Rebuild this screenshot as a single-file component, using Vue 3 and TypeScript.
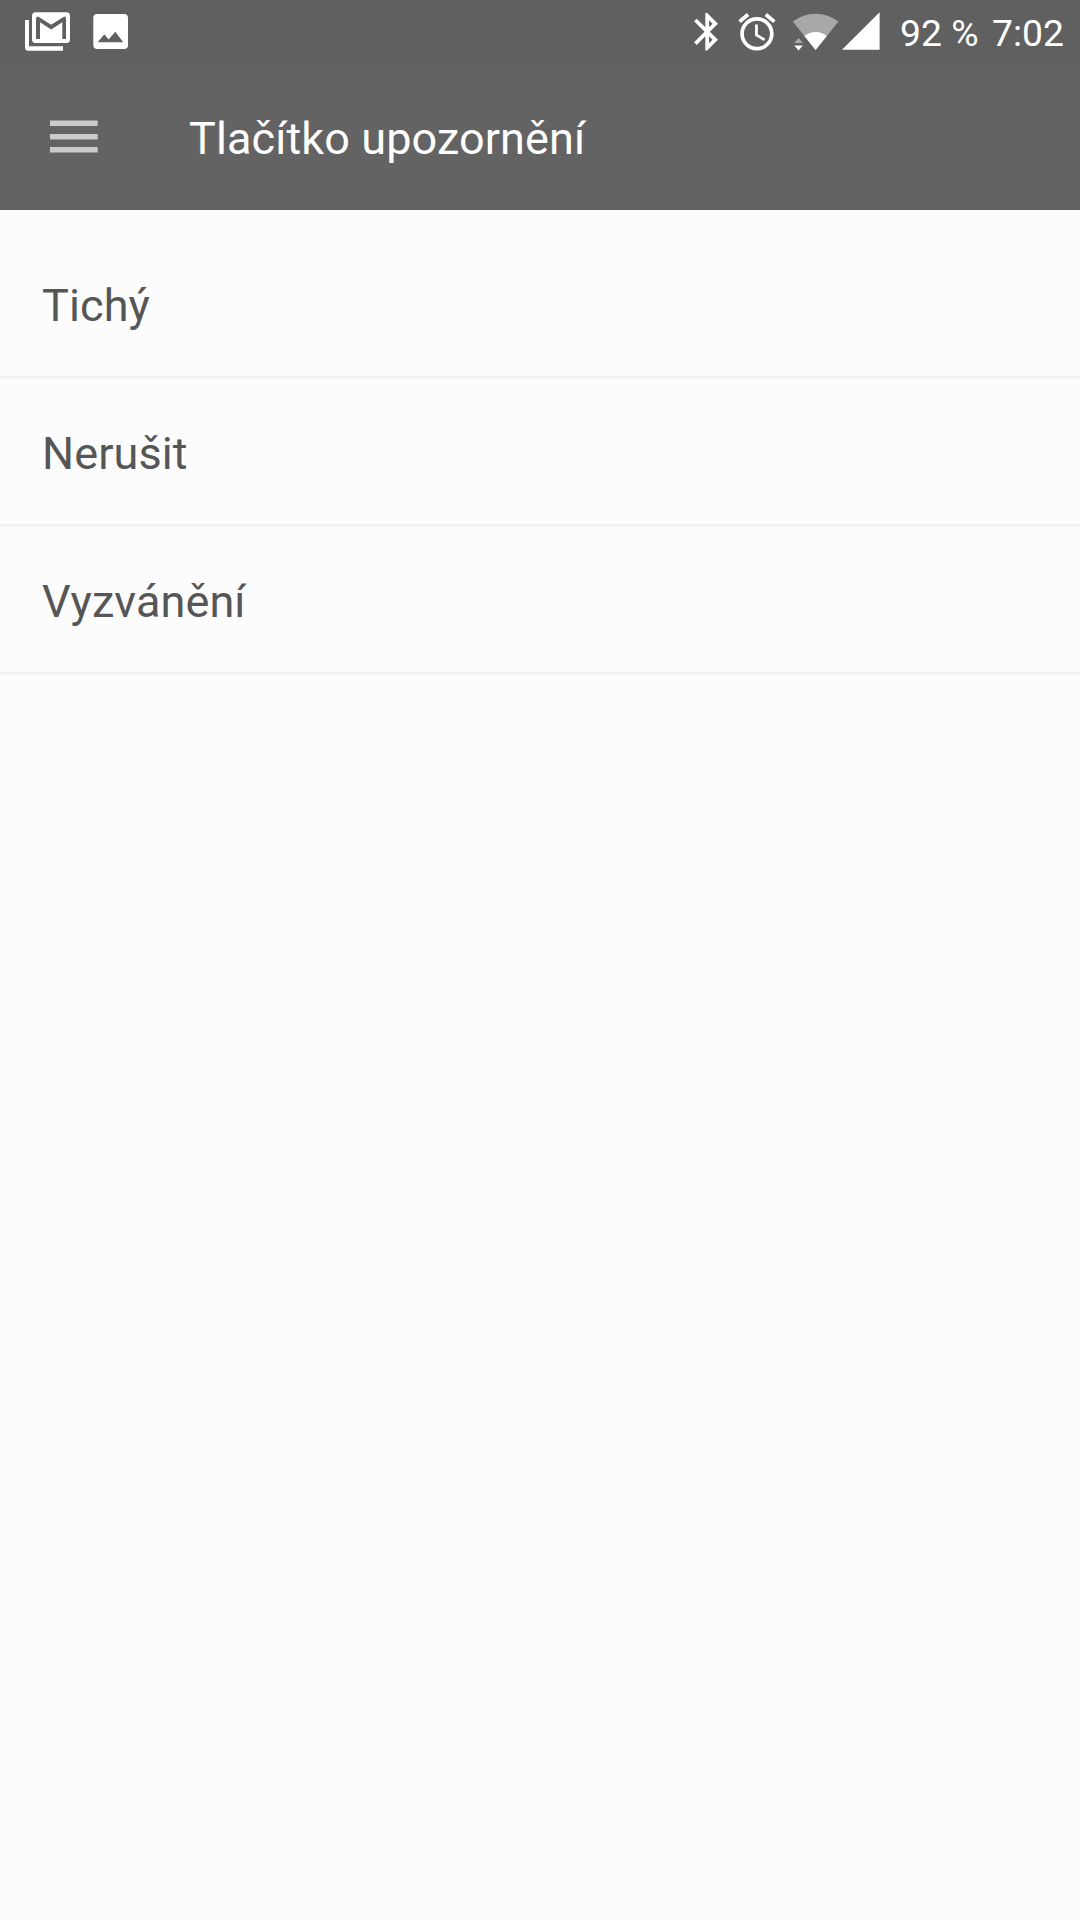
<script setup lang="ts">
interface SoundMode {
  id: string
  label: string
}

const title: string = 'Tlačítko upozornění'
const modes: SoundMode[] = [
  { id: 'silent', label: 'Tichý' },
  { id: 'dnd', label: 'Nerušit' },
  { id: 'ring', label: 'Vyzvánění' },
]
</script>

<template>
  <div class="screen">
    <div class="status-bar">
      <div class="notifications">
        <svg width="46" height="64" viewBox="25 0 46 64">
          <path d="M25 20H29V46.3H63V50.8H28.5Q25 50.8 25 47.3Z" fill="#fff" />
          <rect x="32" y="12.3" width="38" height="30.7" rx="3.5" fill="#fff" />
          <path d="M36 39V18.5Q36 16.5 38 16.5L51.2 24.8L64.3 16.5Q66 16.5 66 18.5V39H62.3V22.3L51.2 29.6L40 22.3V39Z" fill="#606060" />
        </svg>
        <svg class="photo" width="36" height="64" viewBox="93 0 36 64">
          <rect x="93.3" y="14" width="34.7" height="35" rx="4" fill="#fff" />
          <path d="M97.7 42.3L104.3 34.3L108.6 39.6L115.3 31.7L123.3 42.3Z" fill="#606060" />
        </svg>
      </div>
      <div class="indicators">
        <svg width="26" height="64" viewBox="693 0 26 64">
          <path
            transform="translate(684.7 9.3) scale(1.875)"
            fill="#fff"
            d="M17.71 7.71L12 2h-1v7.59L6.41 5 5 6.41 10.59 12 5 17.59 6.41 19 11 14.41V22h1l5.71-5.71-4.3-4.29 4.3-4.29zM13 5.83l1.88 1.88L13 9.59V5.83zm1.88 10.46L13 18.17v-3.76l1.88 1.88z"
          />
        </svg>
        <svg class="alarm" width="38" height="64" viewBox="738 0 38 64">
          <path
            transform="translate(734.6 9.6) scale(1.86)"
            fill="#fff"
            d="M22 5.72l-4.6-3.86-1.29 1.53 4.6 3.86L22 5.72zM7.88 3.39L6.6 1.86 2 5.71l1.29 1.53 4.59-3.85zM12.5 8H11v6l4.75 2.85.75-1.23-4-2.37V8zM12 4c-4.97 0-9 4.03-9 9s4.02 9 9 9a9 9 0 0 0 0-18zm0 16c-3.87 0-7-3.13-7-7s3.13-7 7-7 7 3.13 7 7-3.13 7-7 7z"
          />
        </svg>
        <svg class="wifi" width="46" height="64" viewBox="793 0 46 64">
          <path d="M815.6 50L792.8 21.6Q803 13.7 815.6 13.7T838.4 21.6Z" fill="#a8a8a8" />
          <path d="M815.6 50L804.4 36Q809.6 32 815.6 32T826.8 36Z" fill="#fff" />
          <path d="M794.3 43L798.6 38L802.9 43Z" fill="#a8a8a8" />
          <path d="M794.3 45.6H802.9L798.6 50.4Z" fill="#fff" />
        </svg>
        <svg class="signal" width="40" height="64" viewBox="842 0 40 64">
          <path d="M842 49.7L879.6 12.3V49.7Z" fill="#fff" />
        </svg>
        <span class="battery">92 %</span>
        <span class="clock">7:02</span>
      </div>
    </div>
    <header class="app-bar">
      <svg width="48" height="34" viewBox="50 120 48 34">
        <path d="M50 120.5H97.7V126H50ZM50 134H97.7V139.6H50ZM50 147H97.7V152.6H50Z" fill="#cbcbcb" />
      </svg>
      <h1>{{ title }}</h1>
    </header>
    <ul class="modes">
      <li v-for="mode in modes" :key="mode.id">{{ mode.label }}</li>
    </ul>
  </div>
</template>

<style>
body {
  margin: 0;
  background: #fcfcfc;
}
</style>

<style scoped>
.screen {
  width: 1080px;
  height: 1920px;
  overflow: hidden;
  background: #fcfcfc;
  font-family: Roboto, sans-serif;
}
.status-bar {
  display: flex;
  justify-content: space-between;
  box-sizing: border-box;
  height: 63px;
  padding: 0 16px 0 25px;
  background: #606060;
  color: #fff;
}
.notifications,
.indicators {
  display: flex;
}
.indicators {
  width: 371px;
}
svg {
  display: block;
  flex: none;
}
.photo {
  margin-left: 22px;
}
.alarm {
  margin-left: 19px;
}
.wifi {
  margin-left: 17px;
}
.signal {
  margin-left: 3px;
}
.battery,
.clock {
  font-size: 37.3px;
  line-height: 67px;
  white-space: nowrap;
}
.battery {
  margin-left: 18px;
}
.clock {
  margin-left: auto;
}
.app-bar {
  display: flex;
  align-items: center;
  box-sizing: border-box;
  height: 147px;
  padding-left: 50px;
  background: #636363;
}
h1 {
  margin: 4px 0 0 91px;
  color: #fff;
  font-size: 45px;
  font-weight: 400;
  letter-spacing: 0.1px;
  line-height: 60px;
}
.modes {
  margin: 0;
  padding: 21px 0 0;
  list-style: none;
}
.modes li {
  box-sizing: border-box;
  height: 148px;
  padding: 4px 42px 0;
  border-bottom: 3px solid #f3f3f3;
  color: #565656;
  font-size: 45px;
  letter-spacing: 0.1px;
  line-height: 142px;
}
</style>
